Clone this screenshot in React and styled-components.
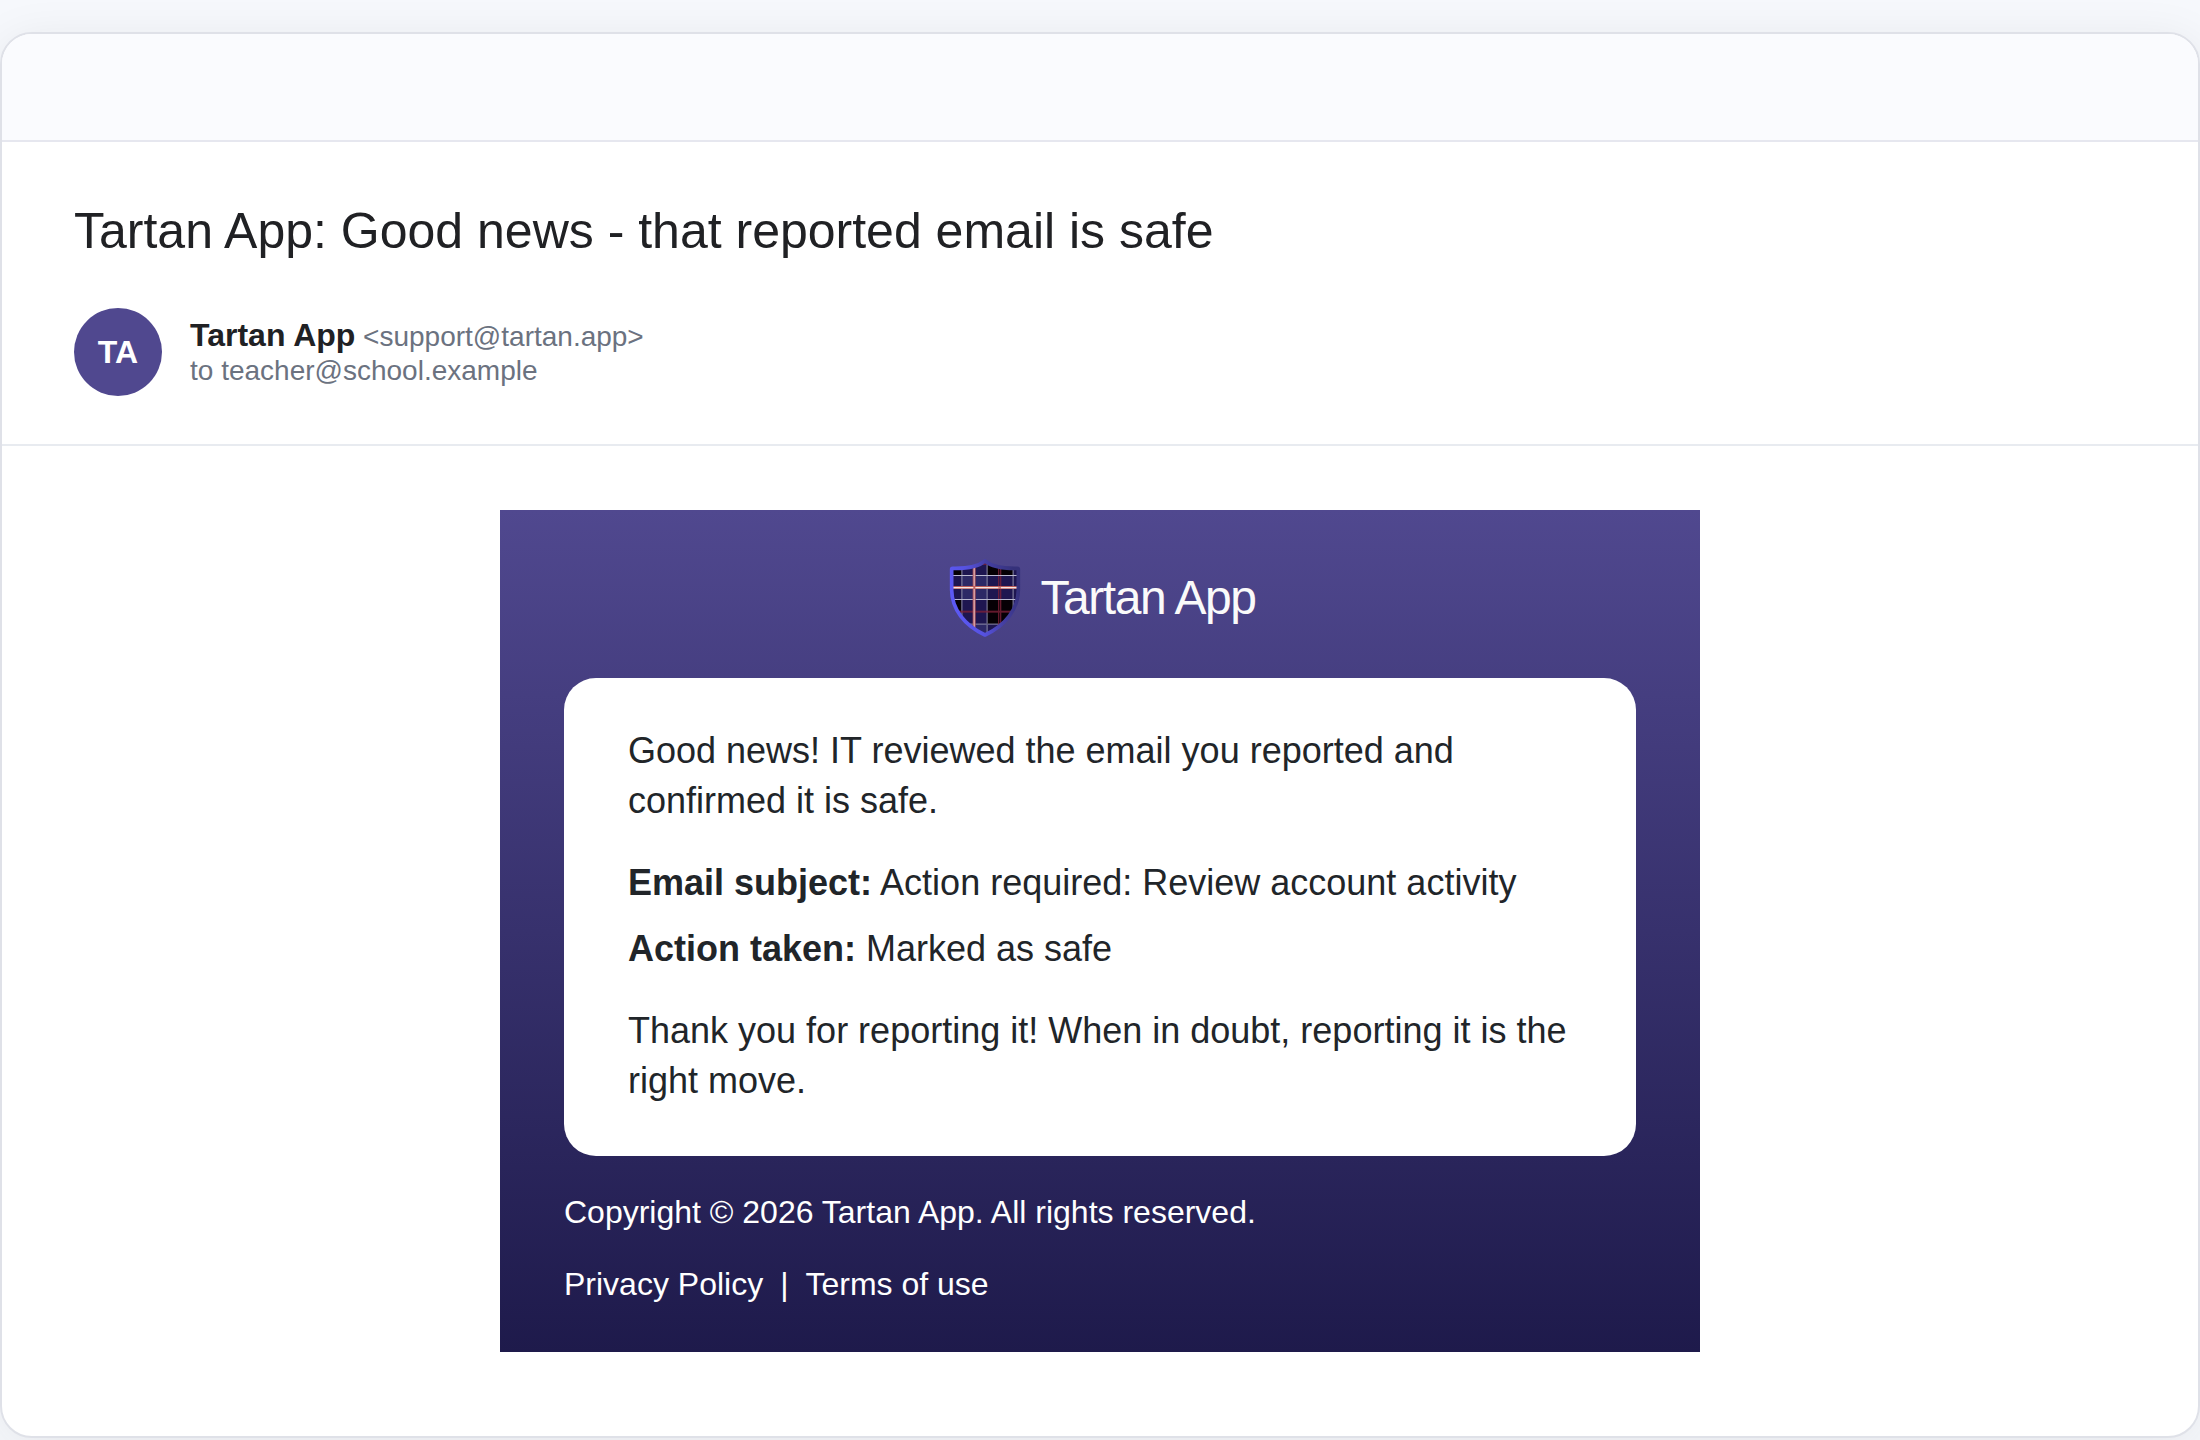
import React from "react";
import styled, { createGlobalStyle } from "styled-components";

const GlobalStyle = createGlobalStyle`
  *, *::before, *::after { box-sizing: border-box; }
  body {
    margin: 0;
    background: #f6f8fc;
    color: #202124;
    font-family: Arial, "Liberation Sans", sans-serif;
  }
  h1, p { margin: 0; }
`;

const Page = styled.main`
  min-height: 100vh;
  padding: 32px 0 2px;
  overflow: hidden;
`;

const MailWindow = styled.article`
  overflow: hidden;
  border: 2px solid #dfe1e8;
  border-radius: 32px;
  background: #ffffff;
  box-shadow: 0 8px 48px rgba(32, 33, 36, 0.08);
`;

const Toolbar = styled.div`
  height: 108px;
  border-bottom: 2px solid #e6e7ef;
  background: #fafbfe;
`;

const MailHeader = styled.header`
  display: flex;
  flex-direction: column;
  gap: 46px;
  padding: 58px 72px 48px;
  border-bottom: 2px solid #e8ebf0;
`;

const Subject = styled.h1`
  font-size: 50px;
  font-weight: 400;
  line-height: 62px;
`;

const Sender = styled.div`
  display: flex;
  align-items: center;
  gap: 28px;
`;

const Avatar = styled.div`
  display: flex;
  align-items: center;
  justify-content: center;
  width: 88px;
  height: 88px;
  border-radius: 50%;
  background: #50488f;
  color: #ffffff;
  font-size: 32px;
  font-weight: 700;
`;

const SenderInfo = styled.div`
  padding-top: 2px;
`;

const SenderLine = styled.p`
  color: #6b7280;
  font-size: 28px;
  line-height: 34px;
`;

const SenderName = styled.strong`
  color: #202124;
  font-size: 32px;
`;

const MailBody = styled.div`
  padding: 64px 64px 84px;
`;

const Email = styled.section`
  max-width: 1200px;
  margin: 0 auto;
  padding: 48px 64px;
  background: linear-gradient(180deg, #50488f 0%, #1e1a4b 100%);
`;

const Brand = styled.div`
  display: flex;
  align-items: center;
  justify-content: center;
  gap: 16px;
  margin-bottom: 40px;
`;

const BrandName = styled.span`
  color: #fafafa;
  font-size: 48px;
  line-height: 56px;
  letter-spacing: -0.03em;
`;

const Logo = styled.svg`
  display: block;
  width: 80px;
  height: 80px;
`;

const Message = styled.div`
  display: flex;
  flex-direction: column;
  gap: 32px;
  padding: 48px 64px 50px;
  border-radius: 32px;
  background: #ffffff;
  color: #212529;
  font-size: 36px;
  line-height: 50px;
`;

const Details = styled.div`
  display: flex;
  flex-direction: column;
  gap: 16px;
`;

const Footer = styled.footer`
  display: flex;
  flex-direction: column;
  gap: 32px;
  padding-top: 36px;
  color: #ffffff;
  font-size: 32px;
  line-height: 40px;
`;

const FooterLinks = styled.nav`
  display: flex;
  gap: 17px;
`;

const FooterLink = styled.a`
  color: inherit;
  text-decoration: none;
`;

const SHIELD =
  "M165 63 C145 80 110 86 68 85 Q65 85 65 88 V150 C66 208 103 256 165 285 C227 256 264 208 265 150 V88 Q265 85 262 85 C220 86 185 80 165 63 Z";

function ShieldLogo() {
  return (
    <Logo viewBox="42 54 240 240" aria-hidden="true">
      <defs>
        <linearGradient id="rim" x1="0" y1="0.65" x2="1" y2="0.35">
          <stop offset="0" stopColor="#5d5af8" />
          <stop offset="0.35" stopColor="#5652e0" />
          <stop offset="0.65" stopColor="#4540a4" />
          <stop offset="1" stopColor="#35317a" />
        </linearGradient>
        <clipPath id="shield">
          <path d={SHIELD} />
        </clipPath>
      </defs>
      <g clipPath="url(#shield)">
        <rect x="42" y="54" width="240" height="240" fill="#050207" />
        <g fill="#1f1852">
          <rect x="95" y="54" width="76" height="240" />
          <rect x="249" y="54" width="33" height="240" />
          <rect x="42" y="106" width="240" height="72" />
          <rect x="42" y="252" width="240" height="42" />
        </g>
        <g fill="#2d2b68">
          <rect x="95" y="106" width="76" height="72" />
          <rect x="95" y="252" width="76" height="42" />
        </g>
        <g fill="#8e8ca8" opacity="0.6">
          <rect x="93" y="54" width="5" height="240" />
          <rect x="169" y="54" width="5" height="240" />
          <rect x="247" y="54" width="5" height="240" />
          <rect x="42" y="250" width="240" height="5" />
        </g>
        <g fill="#7b2038" opacity="0.8">
          <rect x="204" y="54" width="4" height="240" />
          <rect x="210" y="54" width="4" height="240" />
          <rect x="42" y="212" width="240" height="6" />
          <rect x="42" y="70" width="240" height="5" />
        </g>
        <g fill="#b9b8d0">
          <rect x="42" y="105" width="240" height="3" />
          <rect x="42" y="177" width="240" height="3" />
        </g>
        <rect x="128" y="54" width="9" height="240" fill="#a8505c" />
        <rect x="131" y="54" width="3" height="240" fill="#e8c4c4" />
        <rect x="42" y="138" width="240" height="9" fill="#b95a58" />
        <rect x="42" y="141" width="240" height="4" fill="#f6e6e2" />
        <rect x="130" y="138" width="6" height="9" fill="#c4605f" />
        <rect x="205" y="138" width="8" height="9" fill="#b95a58" opacity="0.7" />
      </g>
      <path
        d={SHIELD}
        fill="none"
        stroke="url(#rim)"
        strokeWidth="11"
        strokeLinejoin="round"
      />
    </Logo>
  );
}

export default function App() {
  return (
    <>
      <GlobalStyle />
      <Page>
        <MailWindow>
          <Toolbar />
          <MailHeader>
            <Subject>Tartan App: Good news - that reported email is safe</Subject>
            <Sender>
              <Avatar>TA</Avatar>
              <SenderInfo>
                <SenderLine>
                  <SenderName>Tartan App</SenderName> &lt;support@tartan.app&gt;
                </SenderLine>
                <SenderLine>to teacher@school.example</SenderLine>
              </SenderInfo>
            </Sender>
          </MailHeader>
          <MailBody>
            <Email>
              <Brand>
                <ShieldLogo />
                <BrandName>Tartan App</BrandName>
              </Brand>
              <Message>
                <p>
                  Good news! IT reviewed the email you reported and confirmed it
                  is safe.
                </p>
                <Details>
                  <p>
                    <strong>Email subject:</strong> Action required: Review
                    account activity
                  </p>
                  <p>
                    <strong>Action taken:</strong> Marked as safe
                  </p>
                </Details>
                <p>
                  Thank you for reporting it! When in doubt, reporting it is the
                  right move.
                </p>
              </Message>
              <Footer>
                <p>Copyright © 2026 Tartan App. All rights reserved.</p>
                <FooterLinks>
                  <FooterLink href="#privacy">Privacy Policy</FooterLink>
                  <span>|</span>
                  <FooterLink href="#terms">Terms of use</FooterLink>
                </FooterLinks>
              </Footer>
            </Email>
          </MailBody>
        </MailWindow>
      </Page>
    </>
  );
}
